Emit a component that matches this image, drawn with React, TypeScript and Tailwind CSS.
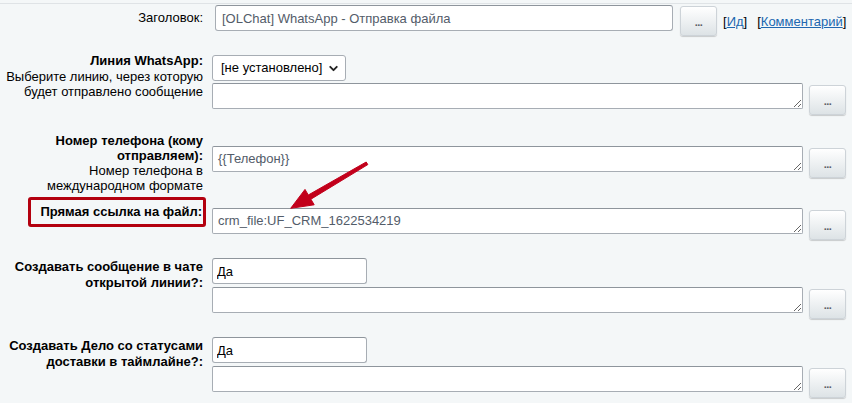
import { ChevronDown } from 'lucide-react';

const Dots = () => (
    <button className="ml-[6px] mt-[2px] flex h-[30px] w-[37px] shrink-0 items-center justify-center rounded-[3px] border border-[#cdd3d8] bg-linear-to-b from-white to-[#dde3e6] pt-[3px] text-[11px] font-bold leading-none tracking-[-0.5px] text-[#5a5f66] shadow-[0_1px_1px_rgba(0,0,0,0.18)]">
        ...
    </button>
);

const Area = ({ value = '' }: { value?: string }) => (
    <textarea
        defaultValue={value}
        className="h-[26px] w-[591px] overflow-hidden rounded-[2px] border border-[#a7adb4] border-t-[#8e959c] bg-white px-[5px] pt-[3px] text-[13px] leading-[18px] text-[#535c69] outline-none"
    />
);

const AreaRow = ({ value }: { value?: string }) => (
    <div className="flex items-start">
        <Area value={value} />
        <Dots />
    </div>
);

const YesInput = () => (
    <input
        defaultValue="Да"
        className="h-[26px] w-[155px] rounded-[3px] border border-[#a7adb4] border-t-[#8e959c] bg-white px-[4px] text-[13px] text-black outline-none"
    />
);

const App = () => {
    return (
        <div className="relative h-[403px] w-[852px] overflow-hidden bg-[#f4f7f8] font-['Liberation_Sans',Arial,sans-serif] text-[13px] leading-[15.5px] text-black">
            <div className="mt-[3px] border-t border-[#dfe3e6]" />

            {/* Заголовок */}
            <div className="mt-[1px] flex items-start">
                <div className="mt-[5px] w-[203px] text-right">Заголовок:</div>
                <div className="ml-[12px] flex items-start">
                    <input
                        defaultValue="[OLChat] WhatsApp - Отправка файла"
                        className="h-[26px] w-[458px] rounded-[3px] border border-[#a7adb4] border-t-[#8e959c] bg-white px-[6px] text-[13px] text-[#535c69] outline-none"
                    />
                    <div className="ml-[7px] mt-[1px] flex h-[30px] w-[37px] shrink-0 items-center justify-center rounded-[3px] border border-[#cdd3d8] bg-linear-to-b from-white to-[#dde3e6] pt-[3px] text-[11px] font-bold leading-none tracking-[-0.5px] text-[#5a5f66] shadow-[0_1px_1px_rgba(0,0,0,0.18)]">
                        ...
                    </div>
                    <div className="ml-[6px] mt-[9px] flex gap-[10px]">
                        <span>
                            [<a href="#" className="text-[#2067b0] underline">Ид</a>]
                        </span>
                        <span>
                            [<a href="#" className="text-[#2067b0] underline">Комментарий</a>]
                        </span>
                    </div>
                </div>
            </div>

            {/* Линия WhatsApp */}
            <div className="mt-[17px] flex items-start">
                <div className="w-[203px] text-right">
                    <div className="font-bold">Линия WhatsApp:</div>
                    <div>Выберите линию, через которую</div>
                    <div>будет отправлено сообщение</div>
                </div>
                <div className="ml-[9px] mt-[2px] flex flex-col gap-[2px]">
                    <div className="relative w-[134px]">
                        <select className="h-[26px] w-[134px] appearance-none rounded-[3px] border border-[#a7adb4] bg-white pl-[8px] text-[13px] text-black outline-none">
                            <option>[не установлено]</option>
                        </select>
                        <ChevronDown
                            size={13}
                            strokeWidth={3.5}
                            className="pointer-events-none absolute right-[6px] top-[7px] text-[#222]"
                        />
                    </div>
                    <AreaRow />
                </div>
            </div>

            {/* Номер телефона */}
            <div className="mt-[18px] flex items-start">
                <div className="w-[203px] text-right leading-[15px]">
                    <div className="font-bold">Номер телефона (кому</div>
                    <div className="font-bold">отправляем):</div>
                    <div>Номер телефона в</div>
                    <div>международном формате</div>
                </div>
                <div className="ml-[9px] mt-[13px]">
                    <AreaRow value="{{Телефон}}" />
                </div>
            </div>

            {/* Прямая ссылка на файл */}
            <div className="mt-[4px] flex items-start">
                <div className="flex w-[203px] justify-end">
                    <div className="mr-[-3px] rounded-[3px] border-[3px] border-[#b3000f] py-[4px] pl-[9px] pr-[1px] leading-[16px] font-bold">
                        Прямая ссылка на файл:
                    </div>
                </div>
                <div className="ml-[9px] mt-[11px]">
                    <AreaRow value="crm_file:UF_CRM_1622534219" />
                </div>
            </div>

            {/* Создавать сообщение */}
            <div className="mt-[18px] flex items-start">
                <div className="mt-[1px] w-[203px] text-right font-bold">
                    <div>Создавать сообщение в чате</div>
                    <div>открытой линии?:</div>
                </div>
                <div className="ml-[9px] flex flex-col gap-[3px]">
                    <YesInput />
                    <AreaRow />
                </div>
            </div>

            {/* Создавать Дело */}
            <div className="mt-[18px] flex items-start">
                <div className="mt-[1px] w-[203px] text-right font-bold">
                    <div>Создавать Дело со статусами</div>
                    <div>доставки в таймлайне?:</div>
                </div>
                <div className="ml-[9px] flex flex-col gap-[3px]">
                    <YesInput />
                    <AreaRow />
                </div>
            </div>

            {/* Red pointer arrow */}
            <svg
                className="pointer-events-none absolute left-[280px] top-[150px]"
                width="100"
                height="65"
                viewBox="0 0 100 65"
            >
                <polygon
                    points="10.7,58.3 34.2,54.8 30.9,49.2 87.8,14.6 86.2,12 28.3,45 25,39.4"
                    fill="#c2001b"
                    stroke="#c2001b"
                    strokeWidth="1"
                    strokeLinejoin="round"
                />
            </svg>
        </div>
    );
};

export default App;
